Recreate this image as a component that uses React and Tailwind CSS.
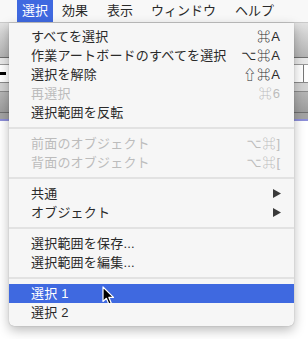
import React from 'react'

const font = { fontFamily: '"Liberation Sans", "Noto Sans CJK JP", "DejaVu Sans", sans-serif' }

const menuBar = [
  { label: '選択', active: true, ml: 'ml-[17px]' },
  { label: '効果', ml: 'ml-[4px]' },
  { label: '表示', ml: 'ml-[9px]' },
  { label: 'ウィンドウ', ml: 'ml-[8px]' },
  { label: 'ヘルプ', ml: 'ml-[9px]' },
]

const groups = [
  [
    { label: 'すべてを選択', key: '⌘A' },
    { label: '作業アートボードのすべてを選択', key: '⌥⌘A' },
    { label: '選択を解除', key: '⇧⌘A' },
    { label: '再選択', key: '⌘6', disabled: true },
    { label: '選択範囲を反転' },
  ],
  [
    { label: '前面のオブジェクト', key: '⌥⌘]', disabled: true },
    { label: '背面のオブジェクト', key: '⌥⌘[', disabled: true },
  ],
  [
    { label: '共通', sub: true },
    { label: 'オブジェクト', sub: true },
  ],
  [
    { label: '選択範囲を保存...' },
    { label: '選択範囲を編集...' },
  ],
  [
    { label: '選択 1', active: true },
    { label: '選択 2' },
  ],
]

const Arrow = () => (
  <svg width="8" height="9" viewBox="0 0 8 9">
    <path d="M0 0 L8 4.5 L0 9 Z" fill="#3a3a3a" />
  </svg>
)

const Cursor = () => (
  <svg width="13" height="20" viewBox="0 0 13 20" className="absolute left-[102px] top-[286px]">
    <path
      d="M1 1 L1 15.5 L4.4 12.3 L6.8 18 L9.2 17 L6.9 11.4 L11.5 11.4 Z"
      fill="#000"
      stroke="#fff"
      strokeWidth="1.2"
      strokeLinejoin="round"
    />
  </svg>
)

const MenuItem = ({ item }) => {
  const color = item.active ? 'text-white' : item.disabled ? 'text-[#bcbcbc]' : 'text-[#2a2a2a]'
  return (
    <div
      className={`h-[19px] flex items-center justify-between pl-[22px] pr-[13px] text-[13px] leading-none ${color} ${
        item.active ? 'bg-[#3f69e0]' : ''
      }`}
    >
      <span className="tracking-[0.2px]">{item.label}</span>
      {item.key && <span className="tracking-[1px]">{item.key}</span>}
      {item.sub && <Arrow />}
    </div>
  )
}

export default function App() {
  return (
    <div className="relative w-[308px] h-[339px] overflow-hidden bg-white" style={font}>
      {/* menu bar */}
      <div className="h-[23px] flex items-stretch bg-[#f8f8f8] border-b border-[#c9c9c9] text-[13px] text-[#2a2a2a]">
        {menuBar.map((m) => (
          <div
            key={m.label}
            className={`${m.ml} px-[5px] flex items-center ${m.active ? 'bg-[#3f69e0] text-white' : ''}`}
          >
            {m.label}
          </div>
        ))}
      </div>

      {/* app toolbars behind the menu */}
      <div className="h-[35px] bg-gradient-to-b from-[#e2e2e2] to-[#b3b3b3] border-b border-[#6f6f6f]" />
      <div className="h-[7px] bg-[#e8e8e8] border-b border-[#9a9a9a]" />
      <div className="h-[18px] bg-white border-b border-[#8a8a8a] flex items-center justify-between">
        <div className="w-[6px] h-[3px] bg-black" />
        <div className="w-px h-full bg-[#777] mr-[4px]" />
      </div>
      <div className="h-[9px] bg-[#d2d2d2] border-b border-[#8a8a8a]" />
      <div className="h-[21px] bg-gradient-to-b from-[#b5b5b5] to-[#9d9d9d] border-b border-[#6f6f6f]" />
      <div className="h-[8px] bg-[#a3a3a3] border-b-2 border-[#8d8fd8]" />

      {/* dropdown */}
      <div className="absolute left-[9px] top-[23px] w-[285px] bg-[#f6f6f6] rounded-b-[5px] pt-[4px] pb-[4px] shadow-[0_4px_12px_rgba(0,0,0,0.28),0_0_1px_rgba(0,0,0,0.35)]">
        {groups.map((g, gi) => (
          <div key={gi}>
            {gi > 0 && (
              <div className="h-[12px] flex items-center">
                <div className="w-full h-[2px] bg-[#e2e2e2]" />
              </div>
            )}
            {g.map((item) => (
              <MenuItem key={item.label} item={item} />
            ))}
          </div>
        ))}
      </div>

      <Cursor />
    </div>
  )
}
